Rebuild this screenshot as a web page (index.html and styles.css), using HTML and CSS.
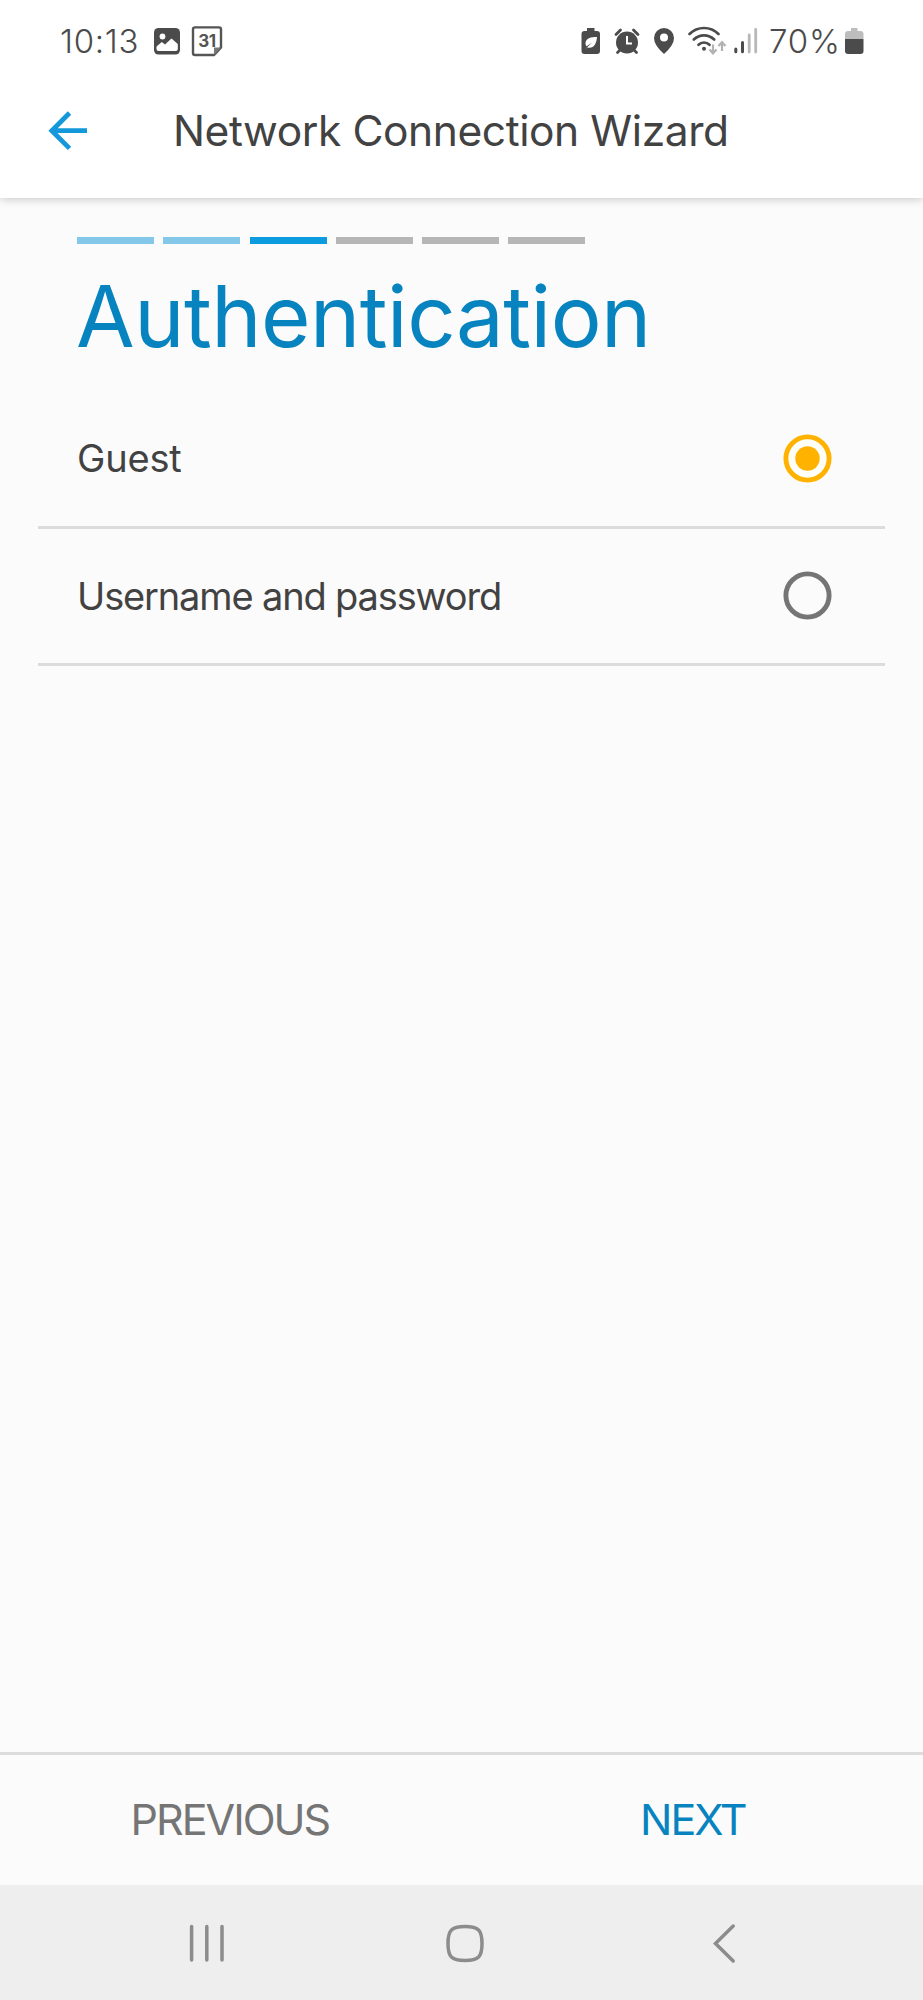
FILE: index.html
```html
<!DOCTYPE html>
<html lang="en">
<head>
<meta charset="utf-8">
<title>Network Connection Wizard</title>
<link rel="stylesheet" href="styles.css">
</head>
<body>
<div class="phone">
  <div class="status">
    <span class="clock">10:13</span>
    <svg class="notices" width="70" height="32" viewBox="153 25 70 32">
      <rect x="154" y="28" width="26" height="26.500" rx="4.500" fill="#4b4b4b"/>
      <circle cx="162.500" cy="36.500" r="2.900" fill="#fff"/>
      <path d="M156.500 49v-2.500l5.300-4.500 3.200 2.500 6.500-6 6.300 5.500v5q0 2-2 2h-17.300q-2 0-2-2z" fill="#fff"/>
      <path d="M195 27.400h24q2 0 2 2v18.100l-7 7.500h-19q-2 0-2-2v-23.600q0-2 2-2z" fill="none" stroke="#555" stroke-width="2.400"/>
      <path d="M214 55v-7.500h7z" fill="#777"/>
      <text class="day" x="207" y="46.500" text-anchor="middle">31</text>
    </svg>
    <svg class="signals" width="178" height="32" viewBox="580 25 178 32">
      <g fill="#4b4b4b">
        <path d="M587 28h7.500v3h2.500q3 0 3 3v17q0 3-3 3h-12.500q-3 0-3-3v-17q0-3 3-3h2.500z"/>
        <circle cx="627" cy="42.500" r="11"/>
        <path d="M654 38a10 10 0 0 1 20 0q0 7-10 16-10-9-10-16z"/>
      </g>
      <path d="M597 37c-6 0-11.500 1-11.500 6.500q0 2 1.300 2.800l5.200-3.800-6.500 6.500 2-1.500c6 1.500 9-3.500 9.500-10.500z" fill="#fff"/>
      <path d="M616 34.500l4.500-4.500M638 34.500l-4.500-4.500M620.500 49.500l-3 3M633.500 49.500l3 3" stroke="#4b4b4b" stroke-width="2.800" stroke-linecap="round"/>
      <path d="M627 36v7.500h5" fill="none" stroke="#fff" stroke-width="2"/>
      <circle cx="664" cy="37.500" r="4" fill="#fff"/>
      <g fill="none" stroke="#4b4b4b" stroke-width="2.700" stroke-linecap="round">
        <path d="M689.500 34a20.500 20.500 0 0 1 29 0"/>
        <path d="M693.800 39.500a14.500 14.500 0 0 1 20.400 0"/>
        <path d="M698.500 44.700a8 8 0 0 1 11 0"/>
      </g>
      <circle cx="704" cy="48.700" r="2" fill="#4b4b4b"/>
      <path d="M713 44.500v8.500m-3.500-3.500l3.500 3.800 3.500-3.800M722 51v-8.500m-3.500 3.500l3.500-3.800 3.500 3.800" fill="none" stroke="#b2b2b2" stroke-width="2.200"/>
      <path d="M735.800 49v2.800M742.500 42.500v9.300" stroke="#4b4b4b" stroke-width="3" stroke-linecap="round"/>
      <path d="M749.200 35v17M755.700 29.500v22.500" stroke="#b8b8b8" stroke-width="2.800" stroke-linecap="round"/>
    </svg>
    <span class="percent">70%</span>
    <svg class="battery" width="20" height="28" viewBox="844 27 20 28">
      <path d="M851 28h6.500v3h3q3 0 3 3v5h-18.500v-5q0-3 3-3h3z" fill="#bdbdbd"/>
      <path d="M845 39h18.500v12q0 3-3 3h-12.500q-3 0-3-3z" fill="#4b4b4b"/>
    </svg>
  </div>
  <header class="toolbar">
    <svg class="back" width="40" height="40" viewBox="48 111 40 40">
      <path d="M69.500 113l-17.700 17.700 17.700 17.700M51 130.700h36" fill="none" stroke="#1398dc" stroke-width="4.800"/>
    </svg>
    <h1 class="title">Network Connection Wizard</h1>
  </header>
  <main class="content">
    <div class="steps">
      <i class="step done"></i><i class="step done"></i><i class="step current"></i>
      <i class="step"></i><i class="step"></i><i class="step"></i>
    </div>
    <h2 class="heading">Authentication</h2>
    <div class="options">
      <label class="option"><span class="guest">Guest</span>
        <svg width="49" height="49" viewBox="-24.500 -24.500 49 49"><circle r="21.600" fill="#fffffa" stroke="#ffb300" stroke-width="4.900"/><circle r="12.200" fill="#ffb300"/></svg>
      </label>
      <label class="option"><span class="username">Username and password</span>
        <svg width="49" height="49" viewBox="-24.500 -24.500 49 49"><circle r="21.600" fill="none" stroke="#757575" stroke-width="4.900"/></svg>
      </label>
    </div>
  </main>
  <footer class="actions">
    <span class="previous">PREVIOUS</span>
    <span class="next">NEXT</span>
  </footer>
  <nav class="system">
    <svg width="923" height="115" viewBox="0 1885 923 115" fill="none" stroke="#8c8c8c" stroke-width="3.500">
      <path d="M191.600 1926.500v33.500M206.800 1926.500v33.500M222 1926.500v33.500" stroke-linecap="round"/>
      <path d="M465 1926.500c13.500 0 17 3.500 17 17s-3.500 17-17 17-17-3.500-17-17 3.500-17 17-17z"/>
      <path d="M733.200 1926l-17.700 17.400 17.700 17.600" stroke-linecap="round"/>
    </svg>
  </nav>
</div>
</body>
</html>
```
FILE: styles.css
```css
* { box-sizing: border-box; }
body { margin: 0; background: #fbfbfb; font-family: Inter, sans-serif; color: #424242; }
.phone { width: 923px; height: 2000px; display: flex; flex-direction: column; overflow: hidden; }
svg { display: block; flex: none; }
span, h1, h2 { white-space: nowrap; }

.status { position: relative; z-index: 1; height: 82px; background: #fff; display: flex; align-items: center; padding-left: 60px; flex: none; color: #4b4b4b; font-size: 33px; font-weight: 300; }
.clock { width: 93px; letter-spacing: .7px; }
.notices { margin-right: 357px; }
.day { font-size: 17px; font-weight: 700; fill: #555; letter-spacing: -.5px; }
.percent { width: 75px; margin-left: 11px; letter-spacing: .8px; }

.toolbar { position: relative; height: 116px; background: #fff; display: flex; align-items: center; padding: 0 0 19px 48px; box-shadow: 0 1px 9px rgba(0, 0, 0, .22); flex: none; }
.title { margin: 0 0 0 85px; font-size: 42.500px; line-height: 52px; font-weight: 400; letter-spacing: -.42px; }

.content { flex: 1; padding: 39px 38px 0; }
.steps { display: flex; gap: 9.300px; padding-left: 39px; }
.step { width: 77px; height: 7px; background: #b6b6b6; }
.done { background: #83c8e9; }
.current { background: #0d9bdf; }
.heading { margin: 13px 0 0 38px; font-size: 85px; line-height: 120px; height: 134px; font-weight: 400; color: #0784bf; letter-spacing: -.5px; }
.option { height: 137.500px; padding: 0 53px 0 39px; border-bottom: 3px solid #dcdcdc; display: flex; align-items: center; justify-content: space-between; font-size: 38px; }
.options { margin-top: 0; }
.guest { letter-spacing: -.2px; }
.username { letter-spacing: -1.15px; }

.actions { height: 133px; border-top: 3px solid #dcdcdc; display: flex; align-items: center; padding-bottom: 2px; font-size: 43px; flex: none; }
.previous { width: 511px; padding-left: 130.500px; color: #757575; letter-spacing: -2px; }
.next { margin-left: 129px; color: #0784bf; letter-spacing: -2px; }
.system { height: 115px; background: #eee; flex: none; }
```
